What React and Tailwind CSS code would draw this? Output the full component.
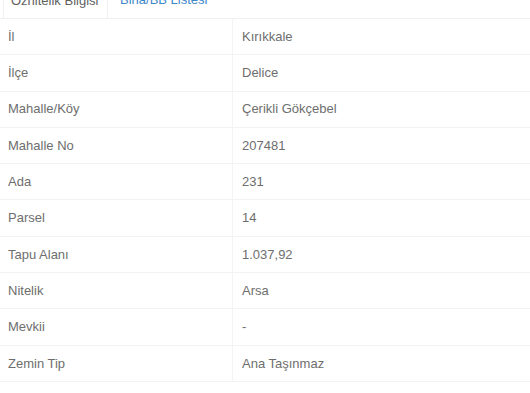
import React from 'react';

const rows = [
    ['İl', 'Kırıkkale'],
    ['İlçe', 'Delice'],
    ['Mahalle/Köy', 'Çerikli Gökçebel'],
    ['Mahalle No', '207481'],
    ['Ada', '231'],
    ['Parsel', '14'],
    ['Tapu Alanı', '1.037,92'],
    ['Nitelik', 'Arsa'],
    ['Mevkii', '-'],
    ['Zemin Tip', 'Ana Taşınmaz'],
];

const App = () => {
    return (
        <div className="w-[530px] h-[393px] overflow-hidden bg-white text-[13px] text-[#6e6e6e]" style={{ fontFamily: '"Liberation Sans", Arial, sans-serif' }}>
            <div className="h-[19px] overflow-hidden border-b border-[#efefef]">
                <div className="flex -mt-[22px] pl-[3px]">
                    <div className="h-[41px] w-[105px] px-[7px] pt-[12px] border-x border-t border-[#efefef] bg-white text-[#606060] whitespace-nowrap">
                        Öznitelik Bilgisi
                    </div>
                    <div className="h-[41px] pl-[12px] pt-[12px] text-[#3d87c9] whitespace-nowrap">
                        Bina/BB Listesi
                    </div>
                </div>
            </div>
            <div>
                {rows.map(([label, value]) => (
                    <div key={label} className="flex h-[36.3px] border-b border-[#f3f3f3]">
                        <div className="w-[233px] pl-[8px] flex items-center border-r border-[#f3f3f3]">{label}</div>
                        <div className="flex-1 pl-[9px] flex items-center">{value}</div>
                    </div>
                ))}
            </div>
        </div>
    );
};

export default App;
